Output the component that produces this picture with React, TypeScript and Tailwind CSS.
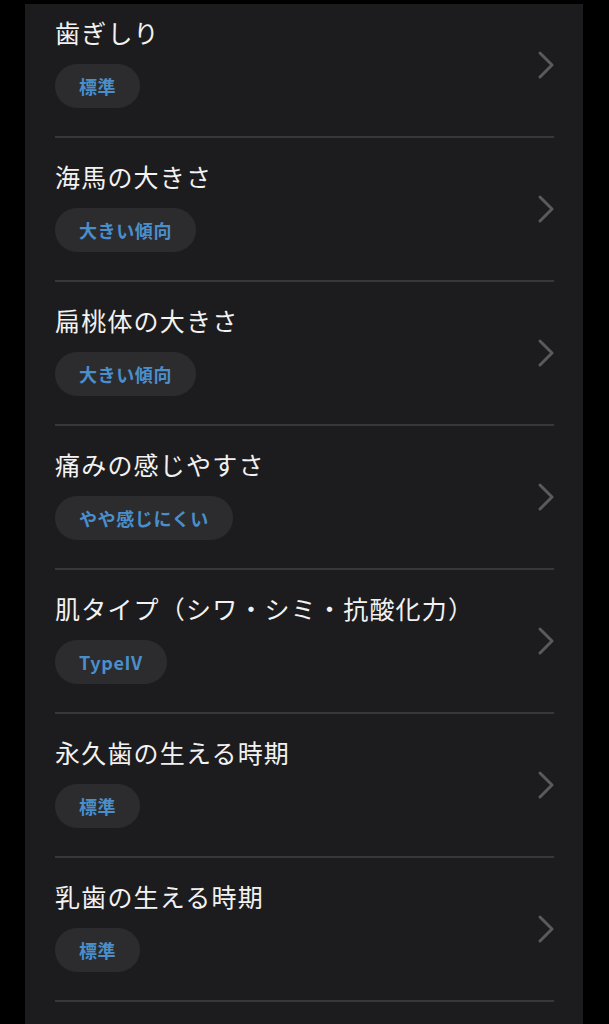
import React from "react";

const rows: { title: string; tag: string }[] = [
  { title: "歯ぎしり", tag: "標準" },
  { title: "海馬の大きさ", tag: "大きい傾向" },
  { title: "扁桃体の大きさ", tag: "大きい傾向" },
  { title: "痛みの感じやすさ", tag: "やや感じにくい" },
  { title: "肌タイプ（シワ・シミ・抗酸化力）", tag: "TypeIV" },
  { title: "永久歯の生える時期", tag: "標準" },
  { title: "乳歯の生える時期", tag: "標準" },
];

function Chevron() {
  return (
    <svg width="16" height="28" viewBox="0 0 16 28" fill="none" className="shrink-0">
      <polyline
        points="2,2 14,14 2,26"
        stroke="#5a5a5e"
        strokeWidth="3"
        strokeLinecap="round"
        strokeLinejoin="round"
      />
    </svg>
  );
}

export default function App() {
  return (
    <div
      className="w-[609px] h-[1024px] bg-black overflow-hidden pt-[4px]"
      style={{ fontFamily: '"Noto Sans CJK JP", "Noto Sans", sans-serif' }}
    >
      <div className="mx-[25px] w-[558px] h-[1020px] bg-[#1c1c1e] overflow-hidden">
        <div className="-mt-[10px] pr-[29px] pl-[30px]">
          {rows.map((r, i) => (
            <div key={i} className="border-b-2 border-[#38383a]">
              <div className="h-[142px] flex items-center justify-between">
                <div className="self-stretch pt-[20px] flex flex-col items-start">
                  <div className="text-[25px] leading-[36px] text-[#f2f2f2] tracking-[1.2px]">
                    {r.title}
                  </div>
                  <div className="mt-[14px] h-[44px] px-[24px] rounded-full bg-[#2c2c2e] flex items-center text-[18px] font-bold text-[#4a8fcb] tracking-[0.6px]">
                    {r.tag}
                  </div>
                </div>
                <Chevron />
              </div>
            </div>
          ))}
        </div>
      </div>
    </div>
  );
}
